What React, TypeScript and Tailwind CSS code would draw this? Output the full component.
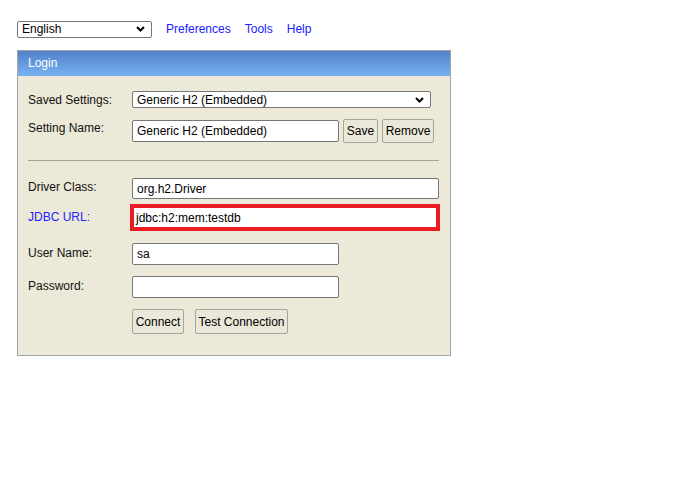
import React from "react";

const font = { fontFamily: '"Liberation Sans", Arial, sans-serif' };

function Chevron() {
  return (
    <svg width="9" height="6" viewBox="0 0 9 6" className="shrink-0">
      <polyline points="1,1 4.5,4.5 8,1" fill="none" stroke="#000" strokeWidth="2" />
    </svg>
  );
}

function FakeSelect({ value, className }: { value: string; className: string }) {
  return (
    <div
      className={`flex items-center justify-between rounded-[2px] border border-[#767676] bg-white pl-[4px] pr-[6px] text-[12px] leading-none text-black ${className}`}
    >
      <span>{value}</span>
      <Chevron />
    </div>
  );
}

function Field({ value, className }: { value?: string; className: string }) {
  return (
    <div
      className={`flex items-center rounded-[2px] border border-[#767676] bg-white pl-[4px] text-[12px] leading-none text-black ${className}`}
    >
      {value}
    </div>
  );
}

function Btn({ label, className }: { label: string; className: string }) {
  return (
    <div
      className={`flex items-center justify-center rounded-[2px] border border-[#a7a59b] bg-[#ebe8da] text-[12px] leading-none text-black ${className}`}
    >
      {label}
    </div>
  );
}

function Label({ text, blue, className = "" }: { text: string; blue?: boolean; className?: string }) {
  return (
    <div className={`w-[104px] shrink-0 pt-[2px] text-[12px] leading-[14px] ${blue ? "text-[#2222ff]" : "text-[#111]"} ${className}`}>
      {text}
    </div>
  );
}

export default function App() {
  return (
    <div className="min-h-[495px] bg-white px-[17px] pt-[20px]" style={font}>
      <div className="flex items-center">
        <FakeSelect value="English" className="h-[17px] w-[135px]" />
        <a className="ml-[14px] text-[12px] text-[#2020ff]">Preferences</a>
        <a className="ml-[14px] text-[12px] text-[#2020ff]">Tools</a>
        <a className="ml-[14px] text-[12px] text-[#2020ff]">Help</a>
      </div>

      <div className="mt-[12px] w-[434px] border border-[#a3a3a3] bg-[#ece9d8]">
        <div className="flex h-[25px] items-center bg-gradient-to-b from-[#5282cb] to-[#79b2f2] pb-[2px] pl-[10px] text-[12px] text-white">
          Login
        </div>

        <div className="px-[10px] pt-[15px] pb-[21px]">
          <div className="flex">
            <Label text="Saved Settings:" className="pt-[1px]" />
            <FakeSelect value="Generic H2 (Embedded)" className="h-[17px] w-[299px]" />
          </div>

          <div className="mt-[11px] flex items-start">
            <Label text="Setting Name:" className="pt-[1px]" />
            <Field value="Generic H2 (Embedded)" className="mt-[1px] h-[22px] w-[207px]" />
            <Btn label="Save" className="ml-[4px] h-[24px] w-[35px]" />
            <Btn label="Remove" className="ml-[4px] h-[24px] w-[52px]" />
          </div>

          <div className="mt-[17px] h-px w-[411px] bg-[#a5a39a]" />

          <div className="mt-[17px] flex">
            <Label text="Driver Class:" />
            <Field value="org.h2.Driver" className="h-[21px] w-[307px]" />
          </div>

          <div className="mt-[5px] flex">
            <Label text="JDBC URL:" blue className="pt-[6px]" />
            <div className="-ml-[2px] flex h-[27px] w-[311px] items-center border-[4px] border-[#ec1c24] bg-white pl-[2px] text-[12px] leading-none text-black">
              jdbc:h2:mem:testdb
            </div>
          </div>

          <div className="mt-[12px] flex">
            <Label text="User Name:" className="pt-[3px]" />
            <Field value="sa" className="h-[22px] w-[207px]" />
          </div>

          <div className="mt-[11px] flex">
            <Label text="Password:" className="pt-[3px]" />
            <Field className="h-[22px] w-[207px]" />
          </div>

          <div className="mt-[11px] flex">
            <div className="w-[104px] shrink-0" />
            <Btn label="Connect" className="h-[25px] w-[52px]" />
            <Btn label="Test Connection" className="ml-[11px] h-[25px] w-[93px]" />
          </div>
        </div>
      </div>
    </div>
  );
}
